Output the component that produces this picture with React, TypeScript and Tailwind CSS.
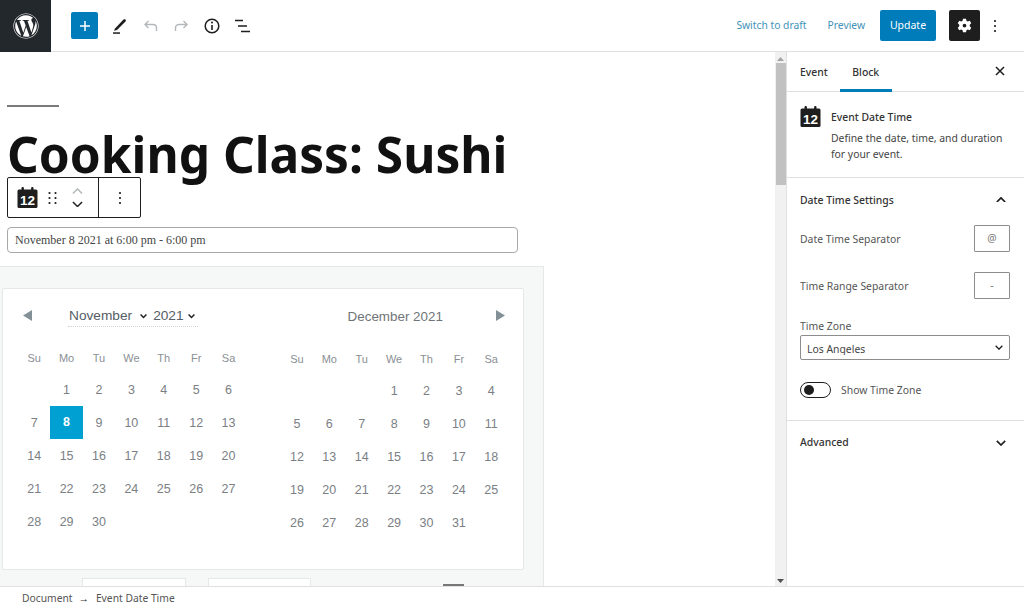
import { FaWordpress } from "react-icons/fa";

const HEAD = ["Su", "Mo", "Tu", "We", "Th", "Fr", "Sa"];
const nov: (number | null)[] = [null, ...Array.from({ length: 30 }, (_, i) => i + 1)];
const dec: (number | null)[] = [null, null, null, ...Array.from({ length: 31 }, (_, i) => i + 1)];

function CalIcon() {
  return (
    <svg width="21" height="21" viewBox="0 0 21 21" className="block">
      <rect x="0.5" y="2.500" width="20" height="18.500" rx="1.500" fill="#1e1e1e" />
      <rect x="4.500" y="0" width="2.400" height="4" rx="1" fill="#1e1e1e" />
      <rect x="14.100" y="0" width="2.400" height="4" rx="1" fill="#1e1e1e" />
      <text x="10.500" y="17.500" textAnchor="middle" fontSize="13.500" fontWeight="700" fill="#fff" fontFamily="Liberation Sans, sans-serif">12</text>
    </svg>
  );
}

function Month({ days, selected, className }: { days: (number | null)[]; selected?: number; className: string }) {
  return (
    <div className={`grid grid-cols-[repeat(7,32.4px)] auto-rows-[33px] grid-rows-[30px] ${className}`}>
      {HEAD.map((h) => (
        <div key={h} className="flex items-center justify-center text-[11px] text-[#8a8f94]">{h}</div>
      ))}
      {days.map((d, i) => (
        <div
          key={i}
          className={`flex items-center justify-center text-[12.5px] ${d === selected ? "bg-[#00a0d2] text-white font-bold" : "text-[#7b8085] pt-[2px]"}`}
        >
          {d}
        </div>
      ))}
    </div>
  );
}

function Chevron({ up, color = "#1e1e1e", w = 11, sw = 1.6 }: { up?: boolean; color?: string; w?: number; sw?: number }) {
  return (
    <svg width={w} height={(w * 7) / 12} viewBox="0 0 12 7" className="block">
      <path d={up ? "M1 6l5-5 5 5" : "M1 1l5 5 5-5"} fill="none" stroke={color} strokeWidth={sw} />
    </svg>
  );
}

function Kebab() {
  return (
    <svg width="4" height="14" viewBox="0 0 4 14" className="block">
      <circle cx="2" cy="2" r="1.100" fill="#1e1e1e" />
      <circle cx="2" cy="7" r="1.100" fill="#1e1e1e" />
      <circle cx="2" cy="12" r="1.100" fill="#1e1e1e" />
    </svg>
  );
}

export default function App() {
  return (
    <div className="w-[1024px] h-[607px] flex flex-col overflow-hidden bg-white text-[#1e1e1e] font-['Noto_Sans',sans-serif]">
      <header className="h-[52px] shrink-0 flex items-center border-b border-[#e0e0e0]">
        <div className="w-[51px] h-[52px] -mb-px bg-[#23282d] flex items-center justify-center text-white">
          <FaWordpress size={26} />
        </div>
        <div className="w-[27px] h-[27px] ml-5 bg-[#007cba] rounded-[2px] flex items-center justify-center">
          <svg width="12" height="12" viewBox="0 0 12 12"><path d="M6 1v10M1 6h10" stroke="#fff" strokeWidth="1.5" /></svg>
        </div>
        <svg width="18" height="18" viewBox="0 0 18 18" className="ml-[13px]">
          <path d="M4 11.500L12.500 2.500c.6-.5 1.300-.5 1.900 0s.6 1.400.1 2L6 13l-3 .8z" fill="#1e1e1e" />
          <rect x="2" y="15.300" width="7" height="1.500" fill="#1e1e1e" />
        </svg>
        <svg width="16" height="14" viewBox="0 0 16 14" className="ml-[14px]">
          <path d="M5.500 2L2 5.500 5.500 9M2 5.500h8c2.200 0 3.500 1.400 3.500 3.400V12" fill="none" stroke="#b5b8ba" strokeWidth="1.400" />
        </svg>
        <svg width="16" height="14" viewBox="0 0 16 14" className="ml-[14px]">
          <path d="M10.500 2L14 5.500 10.500 9M14 5.500H6C3.800 5.500 2.500 6.900 2.500 8.900V12" fill="none" stroke="#b5b8ba" strokeWidth="1.400" />
        </svg>
        <svg width="18" height="18" viewBox="0 0 18 18" className="ml-[14px]">
          <circle cx="9" cy="9" r="6.800" fill="none" stroke="#1e1e1e" strokeWidth="1.500" />
          <path d="M9 8v5" stroke="#1e1e1e" strokeWidth="1.600" />
          <circle cx="9" cy="5.600" r="1" fill="#1e1e1e" />
        </svg>
        <svg width="18" height="14" viewBox="0 0 18 14" className="ml-[13px]">
          <path d="M1 1.500h8M4 7h9M7 12.500h9" stroke="#1e1e1e" strokeWidth="1.500" />
        </svg>
        <div className="ml-auto flex items-center text-[10.3px] text-[#3f93b8]">
          <span>Switch to draft</span>
          <span className="ml-[21px]">Preview</span>
          <div className="ml-[15px] w-[56px] h-[31px] bg-[#007cba] rounded-[2px] text-white text-[10.500px] flex items-center justify-center">Update</div>
          <div className="ml-[13px] w-[31px] h-[31px] bg-[#1e1e1e] rounded-[2px] flex items-center justify-center">
            <svg width="15" height="15" viewBox="0 0 20 20">
              <path fill="#fff" fillRule="evenodd" d="M8 1h4l.6 2.700 1.700.9L17 3.700l2 3.400-2 1.900v2l2 1.900-2 3.400-2.700-.9-1.700.9L12 19H8l-.6-2.700-1.700-.9-2.700.9-2-3.400 2-1.900V9l-2-1.900 2-3.400 2.700.9 1.700-.9zM10 7.500a2.500 2.500 0 100 5 2.500 2.500 0 000-5z" />
            </svg>
          </div>
          <div className="ml-[13px] mr-[27px]"><Kebab /></div>
        </div>
      </header>

      <div className="flex-1 min-h-0 flex">
        <main className="w-[775px] overflow-hidden">
          <div className="w-[52px] h-[2px] mt-[53px] ml-[7px] bg-[#7a7a7a]" />
          <h1 className="ml-[7px] mt-[17px] h-[53px] text-[49.6px] leading-[60px] font-bold text-[#111] whitespace-nowrap">Cooking Class: Sushi</h1>
          <div className="relative ml-[7px] w-[134px] h-[41px] border border-[#1e1e1e] rounded-[2px] bg-white flex items-center">
            <div className="w-[91px] h-full border-r border-[#1e1e1e] flex items-center pl-[9px]">
              <CalIcon />
              <svg width="9" height="14" viewBox="0 0 9 14" className="ml-[10px]">
                {[2, 7, 12].flatMap((y) => [1.500, 7.500].map((x) => <circle key={`${x}${y}`} cx={x} cy={y} r="1.100" fill="#1e1e1e" />))}
              </svg>
              <div className="ml-[15px] flex flex-col gap-[7px]">
                <Chevron up color="#b5b8ba" />
                <Chevron />
              </div>
            </div>
            <div className="flex-1 flex justify-center"><Kebab /></div>
          </div>
          <div className="mt-[9px] ml-[7px] w-[511px] h-[26px] border border-[#a8a8a8] rounded-[4px] flex items-center pl-[7px] text-[12px] text-[#444] font-['Liberation_Serif',serif]">
            November 8 2021 at 6:00 pm - 6:00 pm
          </div>
          <section className="mt-[13px] w-[544px] h-[320px] bg-[#f6f7f7] border-t border-r border-[#e6e8e8] pt-[21px] pl-[2px] font-['Liberation_Sans',sans-serif]">
            <div className="w-[522px] h-[282px] bg-white border border-[#e6e8e8] rounded-[2px] flex flex-col">
              <div className="h-[54px] shrink-0 flex items-center">
                <svg width="9" height="11" viewBox="0 0 10 12" className="ml-[20px] -mt-[2px]"><path d="M10 0v12L0 6z" fill="#839196" /></svg>
                <div className="ml-[36px] h-[20px] mt-[2px] flex items-center border-b border-dotted border-[#d0d4d6] text-[13.7px] text-[#555d66]">
                  <span className="ml-[1px]">November</span>
                  <span className="ml-[8px]"><Chevron w={7} sw={2.500} /></span>
                  <span className="ml-[6px]">2021</span>
                  <span className="ml-[4px] mr-[3px]"><Chevron w={7} sw={2.500} /></span>
                </div>
                <span className="ml-[150px] mt-[2px] text-[13.4px] text-[#6f7478]">December 2021</span>
                <svg width="9" height="11" viewBox="0 0 10 12" className="ml-[53px] -mt-[2px]"><path d="M0 0v12l10-6z" fill="#839196" /></svg>
              </div>
              <div className="flex">
                <Month days={nov} selected={8} className="ml-[15px]" />
                <Month days={dec} className="ml-[36px] mt-[1px]" />
              </div>
            </div>
            <div className="flex mt-[8px] ml-[80px]">
              <div className="w-[104px] h-[20px] bg-white border border-[#e6e8e8]" />
              <div className="w-[103px] h-[20px] bg-white border border-[#e6e8e8] ml-[22px]" />
              <div className="w-[21px] h-[2px] bg-[#777] ml-[132px] mt-[6px]" />
            </div>
          </section>
        </main>

        <div className="w-[11px] shrink-0 bg-[#f1f1f1] flex flex-col items-center pt-[5px] pb-[3px]">
          <svg width="7" height="4" viewBox="0 0 7 4" className="block"><path d="M0 4l3.500-4L7 4z" fill="#a3a3a3" /></svg>
          <div className="w-[10px] h-[122px] mt-[2px] bg-[#c1c1c1]" />
          <svg width="7" height="4" viewBox="0 0 7 4" className="block mt-auto"><path d="M0 0l3.500 4L7 0z" fill="#505050" /></svg>
        </div>

        <aside className="flex-1 border-l border-[#e0e0e0] text-[10.4px]">
          <div className="h-[40px] flex items-stretch border-b border-[#e0e0e0] font-medium text-[#333]">
            <div className="ml-[13px] flex items-center pt-[2px]">Event</div>
            <div className="ml-[12px] w-[52px] -mb-px flex items-center justify-center border-b-[3px] border-[#007cba] pt-[4px]">Block</div>
            <svg width="12" height="12" viewBox="0 0 12 12" className="ml-auto mr-[18px] self-center -mt-[1px]"><path d="M2 2l8 8M10 2l-8 8" stroke="#1e1e1e" strokeWidth="1.500" /></svg>
          </div>
          <div className="h-[86px] border-b border-[#e0e0e0] flex pl-[13px] pt-[14px]">
            <CalIcon />
            <div className="ml-[10px] mt-[3px] leading-[16px] text-[#444]">
              <div className="font-medium text-[#333]">Event Date Time</div>
              <div className="mt-[5px] w-[176px]">Define the date, time, and duration for your event.</div>
            </div>
          </div>
          <div className="h-[243px] border-b border-[#e0e0e0] pl-[13px] pr-[14px] text-[#555]">
            <div className="h-[46px] flex items-center justify-between font-medium text-[#333]">
              <span>Date Time Settings</span>
              <span className="mr-[4px] -mt-[3px]"><Chevron up w={10} sw={2} /></span>
            </div>
            <div className="h-[27px] mt-[1px] flex items-center justify-between">
              <span className="pt-[2px]">Date Time Separator</span>
              <div className="w-[36px] h-[27px] border border-[#8d8d8d] rounded-[1px] flex items-center justify-center text-[#777]">@</div>
            </div>
            <div className="h-[27px] mt-[20px] flex items-center justify-between">
              <span className="pt-[2px]">Time Range Separator</span>
              <div className="w-[36px] h-[27px] border border-[#8d8d8d] rounded-[1px] flex items-center justify-center text-[#777]">-</div>
            </div>
            <div className="mt-[20px] leading-[14px]">Time Zone</div>
            <div className="w-[210px] h-[25px] mt-[2px] border border-[#8d8d8d] rounded-[2px] flex items-center justify-between pl-[6px] pr-[6px] text-[#444]">
              <span className="block mt-[3px] h-[12px] leading-[13px] overflow-hidden">Los Angeles</span>
              <svg width="8" height="5" viewBox="0 0 12 7"><path d="M1 1l5 5 5-5" fill="none" stroke="#1e1e1e" strokeWidth="2" /></svg>
            </div>
            <div className="mt-[21px] flex items-center">
              <div className="w-[31px] h-[16px] border border-[#1e1e1e] rounded-full flex items-center pl-[3px]">
                <div className="w-[10px] h-[10px] bg-[#1e1e1e] rounded-full" />
              </div>
              <span className="ml-[10px] pt-[2px]">Show Time Zone</span>
            </div>
          </div>
          <div className="h-[44px] pl-[13px] pr-[18px] flex items-center justify-between font-medium text-[#333]">
            <span>Advanced</span>
            <Chevron w={10} sw={2} />
          </div>
        </aside>
      </div>

      <footer className="h-[21px] shrink-0 border-t border-[#e0e0e0] bg-white flex items-center pl-[22px] pt-[3px] text-[10.3px] text-[#555]">
        <span>Document</span>
        <span className="ml-[6px] mr-[7px] text-[#333]">→</span>
        <span>Event Date Time</span>
      </footer>
    </div>
  );
}
